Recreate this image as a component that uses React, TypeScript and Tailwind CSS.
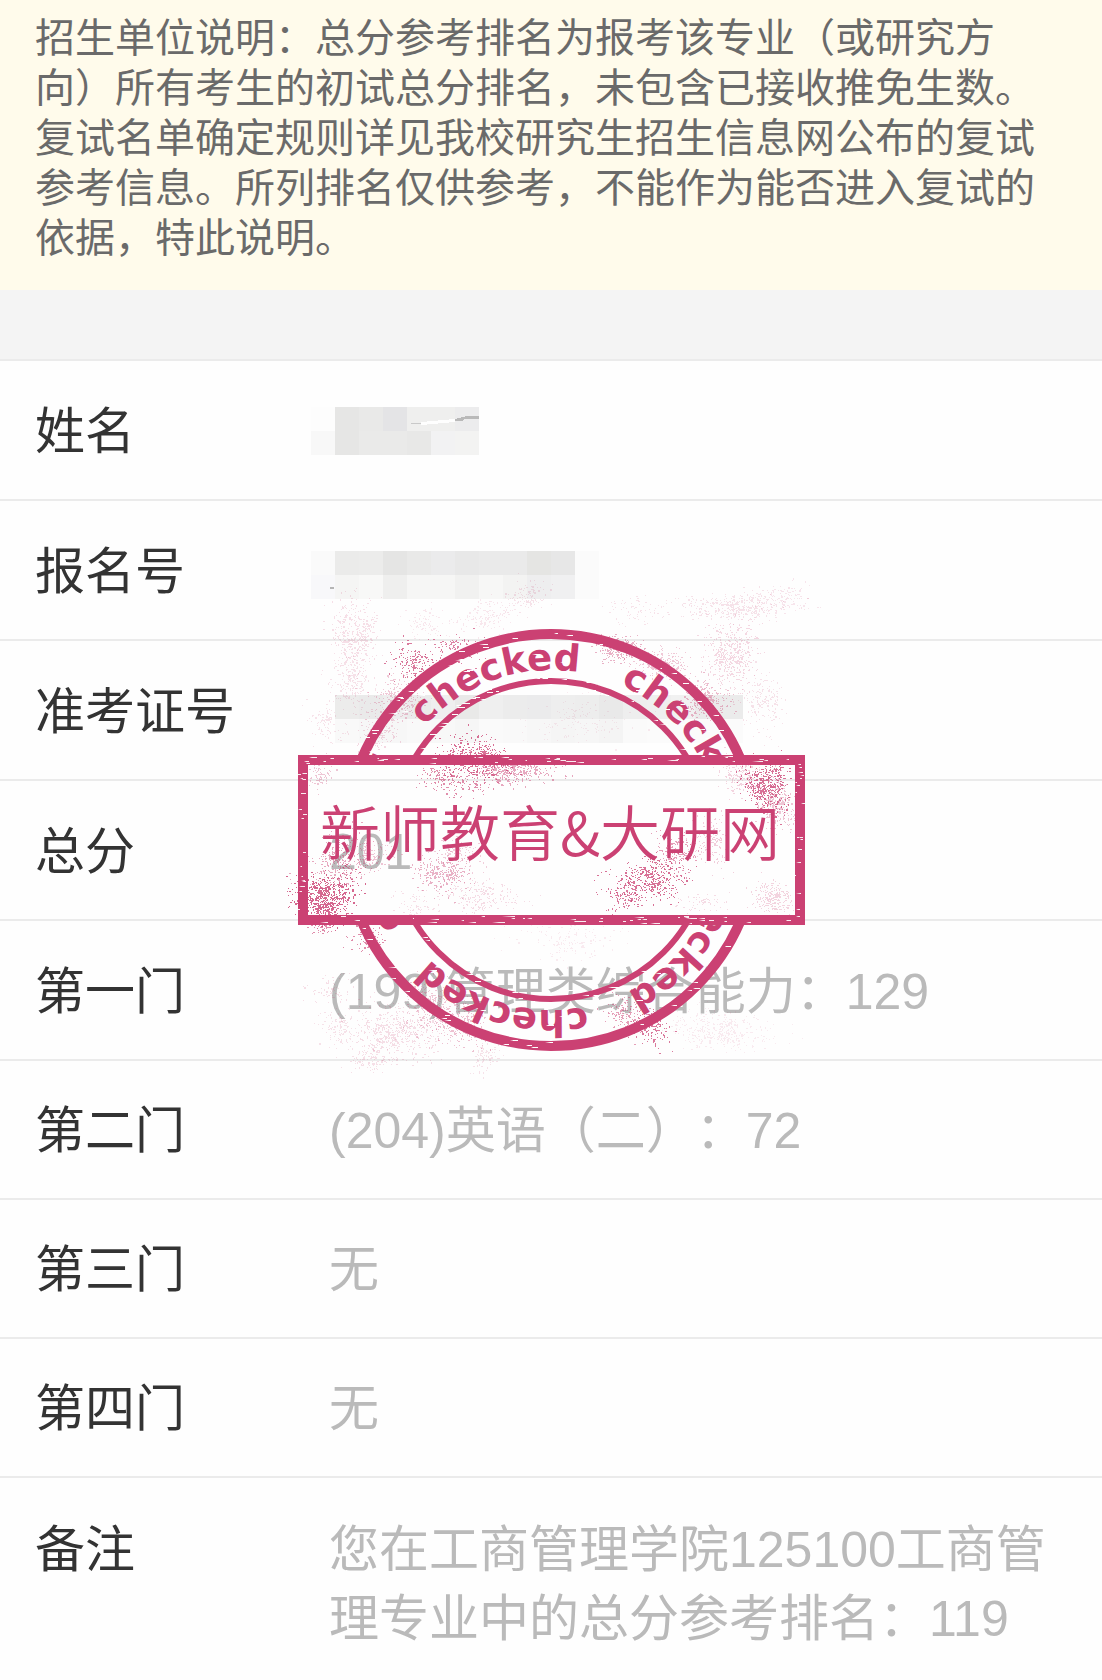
import type React from 'react';

const INK = '#cb4173';
const PAPER = '#fefefe';

type MosaicProps = { rows: string[][]; dy: number; children?: React.ReactNode };

// Pixelated cover over a private value, 24px cells. A row's first cell sits left of the text edge.
const Mosaic: React.FC<MosaicProps> = ({ rows, dy, children }) => (
  <svg
    className="h-12 w-full overflow-visible"
    shapeRendering="crispEdges"
    role="img"
    aria-label="已隐藏"
  >
    <g transform={`translate(0 ${dy})`}>
      {rows.map((cells, r) =>
        cells.map((fill, c) => (
          <rect key={`${r}-${c}`} x={c * 24 - 18} y={r * 24} width={24} height={24} fill={fill} />
        )),
      )}
      {children}
    </g>
  </svg>
);

const NAME_CELLS = [
  ['#fdfdfd', '#e6e6e5', '#e9e9e8', '#e4e4e6', '#efefee', '#efefee', '#ececed'],
  ['#f8f8f8', '#e6e6e5', '#eaeae9', '#eaeae9', '#e8e8e7', '#f2f2f3', '#f3f3f2'],
];

const APPLY_CELLS = [
  ['#fafafa', '#ebebea', '#ececeb', '#e5e5e4', '#e9e9e8', '#ebebec', '#e8e8e8', '#eaeaea', '#eaeaea', '#e5e5e3', '#e7e7e7', '#fbfbfb'],
  ['#f8f8fa', '#f5f5f4', '#f8f8f7', '#efefee', '#f6f6f5', '#f6f6f5', '#f1f1f0', '#f7f7f6', '#f3f3f2', '#eeeeef', '#f0f0f1', '#fbfbfb'],
];

const TICKET_CELLS = [
  ['#fefefe', '#ececeb', '#eaeaea', '#eeeeee', '#ebebeb', '#efefef', '#e9e9e8', '#efefef', '#ececec', '#ebebec', '#eeeeee', '#ededed', '#e9e9e9', '#eeeeee', '#efefef', '#f1f1f1', '#ebebeb', '#ebebeb'],
  ['#fefefe', '#f9f9f9', '#f7f7f7', '#f7f7f7', '#f9f9f9', '#f8f8f8', '#f6f6f6', '#fafafa', '#f9f9f9', '#f7f7f7', '#f5f5f5', '#f6f6f6', '#f4f4f4', '#fafafa', '#fbfbfb', '#fbfbfb', '#fbfbfb', '#fbfbfb'],
];

// Small repeatable generator, so that the stamp's grain is the same on every render.
const random = (seed: number) => () => {
  seed = (seed + 0x6d2b79f5) | 0;
  let t = Math.imul(seed ^ (seed >>> 15), 1 | seed);
  t = (t + Math.imul(t ^ (t >>> 7), 61 | t)) ^ t;
  return ((t ^ (t >>> 14)) >>> 0) / 4294967296;
};

// cx, cy, rx, ry, dots, opacity
const SPLATTERS: number[][] = [
  [413, 663, 22, 22, 170, 0.7],
  [455, 650, 26, 18, 110, 0.65],
  [398, 698, 26, 26, 260, 0.28],
  [378, 732, 22, 20, 140, 0.2],
  [355, 635, 28, 34, 420, 0.16],
  [350, 680, 24, 28, 220, 0.15],
  [325, 722, 18, 22, 90, 0.14],
  [425, 622, 24, 20, 80, 0.12],
  [485, 615, 32, 20, 140, 0.12],
  [526, 596, 24, 16, 110, 0.15],
  [618, 648, 26, 12, 260, 0.4],
  [665, 665, 34, 16, 240, 0.28],
  [705, 700, 24, 20, 260, 0.35],
  [632, 608, 24, 16, 70, 0.14],
  [735, 606, 58, 16, 420, 0.15],
  [780, 600, 32, 18, 130, 0.13],
  [730, 655, 30, 34, 480, 0.2],
  [762, 702, 26, 30, 180, 0.15],
  [475, 757, 36, 22, 430, 0.75],
  [510, 769, 42, 16, 450, 0.45],
  [440, 776, 24, 14, 110, 0.6],
  [466, 784, 26, 14, 80, 0.6],
  [320, 774, 16, 16, 80, 0.3],
  [766, 785, 26, 26, 430, 0.75],
  [776, 804, 20, 26, 330, 0.3],
  [740, 775, 22, 22, 200, 0.22],
  [323, 897, 28, 28, 700, 0.8],
  [337, 862, 30, 30, 300, 0.45],
  [372, 855, 22, 18, 120, 0.3],
  [443, 872, 34, 18, 300, 0.4],
  [460, 852, 26, 14, 90, 0.25],
  [480, 896, 38, 18, 220, 0.18],
  [415, 905, 18, 18, 70, 0.16],
  [652, 878, 36, 24, 380, 0.75],
  [626, 894, 22, 18, 130, 0.7],
  [675, 852, 22, 22, 170, 0.5],
  [710, 843, 20, 24, 140, 0.25],
  [773, 898, 22, 18, 240, 0.22],
  [700, 904, 26, 14, 60, 0.18],
  [322, 928, 14, 8, 40, 0.6],
  [368, 936, 18, 16, 90, 0.6],
  [430, 1005, 28, 26, 340, 0.28],
  [460, 1025, 30, 20, 300, 0.32],
  [395, 1032, 44, 28, 520, 0.17],
  [340, 1028, 20, 24, 120, 0.15],
  [330, 990, 20, 18, 70, 0.16],
  [372, 1058, 24, 16, 120, 0.16],
  [486, 1055, 16, 16, 90, 0.15],
  [625, 1014, 22, 18, 150, 0.5],
  [650, 1026, 20, 20, 150, 0.7],
  [720, 1030, 50, 22, 420, 0.1],
  [570, 940, 50, 26, 150, 0.1],
  [580, 722, 60, 26, 140, 0.1],
];

const splatterPath = ([cx, cy, rx, ry, dots]: number[], seed: number) => {
  const next = random(seed * 7919 + 13);
  let d = '';
  for (let i = 0; i < dots; i++) {
    const angle = next() * Math.PI * 2;
    const wobble = 1 + 0.18 * Math.sin(angle * 2 + seed) + 0.14 * Math.sin(angle * 3 + seed * 2);
    // dense in the middle, thinning out towards the rim
    const reach = Math.min(Math.sqrt(-Math.log(1 - next())) * 0.65, 1.3) * wobble;
    const width = next() > 0.8 ? 2 : 1;
    const height = next() > 0.85 ? 2 : 1;
    const x = Math.round(cx + Math.cos(angle) * rx * reach);
    const y = Math.round(cy + Math.sin(angle) * ry * reach);
    d += `M${x} ${y}h${width}v${height}h-${width}z`;
  }
  return d;
};

// Short horizontal scratches where the ink is missing.
const ringScratches = () => {
  const next = random(42);
  let d = '';
  for (let i = 0; i < 190; i++) {
    const angle = next() * Math.PI * 2;
    const radius = i % 3 === 0 ? 159 : i % 3 === 1 ? 206 : 172 + next() * 24;
    const x = Math.round(551 + Math.cos(angle) * radius + next() * 8 - 7);
    const y = Math.round(840 + Math.sin(angle) * radius + next() * 8 - 4);
    d += `M${x} ${y}h${Math.round(1 + next() * 8)}v1h-${Math.round(1 + next() * 6)}z`;
  }
  return d;
};

const frameScratches = () => {
  const next = random(99);
  let d = '';
  for (let i = 0; i < 80; i++) {
    const x = Math.round(302 + next() * 490);
    const y = Math.round((i % 2 ? 756 : 916) + next() * 7);
    d += `M${x} ${y}h${Math.round(1 + next() * next() * 14)}v1h-${Math.round(1 + next() * 5)}z`;
  }
  for (let i = 0; i < 36; i++) {
    const x = Math.round((i % 2 ? 298 : 795) + next() * 6);
    const y = Math.round(760 + next() * 158);
    d += `M${x} ${y}h${Math.round(1 + next() * 4)}v1h-${Math.round(1 + next() * 3)}z`;
  }
  return d;
};

const Stamp: React.FC = () => (
  <svg
    className="pointer-events-none absolute top-[210px] left-1/2 h-[520px] w-[560px] -translate-x-1/2"
    viewBox="271 569 560 520"
    fill={INK}
  >
    <defs>
      <clipPath id="outside-frame">
        <rect x="271" y="569" width="560" height="187" />
        <rect x="271" y="924" width="560" height="166" />
      </clipPath>
      <path id="word-arc" d="M551 670a170 170 0 0 1 0 340a170 170 0 0 1 0 -340" />
    </defs>
    {SPLATTERS.map((splatter, i) => (
      <path key={i} d={splatterPath(splatter, i + 1)} opacity={splatter[5]} />
    ))}
    <g clipPath="url(#outside-frame)">
      <circle cx="551" cy="840" r="206" fill="none" stroke={INK} strokeWidth="10" />
      <circle cx="551" cy="840" r="159" fill="none" stroke={INK} strokeWidth="6" />
      {[-48, 24, 96, 168, 240].map((turn) => (
        <text
          key={turn}
          transform={`rotate(${turn} 551 840)`}
          className="font-['DejaVu_Sans',sans-serif] text-[37px] font-bold"
        >
          <textPath href="#word-arc">checked</textPath>
        </text>
      ))}
      <path d={ringScratches()} fill={PAPER} />
    </g>
    <rect x="303" y="760" width="497" height="160" fill="none" stroke={INK} strokeWidth="10" />
    <path d={frameScratches()} fill={PAPER} opacity="0.9" />
    <text
      x="550"
      y="856"
      textAnchor="middle"
      className="font-['Noto_Sans_CJK_SC',sans-serif] text-[60px] font-[350]"
    >
      新师教育&amp;大研网
    </text>
  </svg>
);

type RowProps = { label: string; short?: boolean; children: React.ReactNode };

const Row: React.FC<RowProps> = ({ label, short, children }) => (
  <div
    className={`flex items-center border-t-2 border-[#ebebeb] px-[35px] pt-1 ${short ? 'h-[139px]' : 'h-[140px]'}`}
  >
    <dt className="w-[294px] shrink-0 text-[#333]">{label}</dt>
    <dd className="min-w-0 flex-1 text-[#bababa]">{children}</dd>
  </div>
);

export default function App() {
  return (
    <main className="min-h-screen bg-[#fefefe] font-['Liberation_Sans','Noto_Sans_CJK_SC',sans-serif] [text-spacing-trim:space-all]">
      <p className="bg-[#fffbeb] px-[35px] pt-[13px] pb-[27px] text-[40px] leading-[50px] text-[#6a6a6a]">
        招生单位说明：总分参考排名为报考该专业（或研究方向）所有考生的初试总分排名，未包含已接收推免生数。复试名单确定规则详见我校研究生招生信息网公布的复试参考信息。所列排名仅供参考，不能作为能否进入复试的依据，特此说明。
      </p>
      <div className="h-[69px] bg-[#f4f4f4]" />
      <div className="relative">
        <dl className="text-[50px] leading-[69px]">
          <Row label="姓名">
            <Mosaic rows={NAME_CELLS} dy={-1}>
              <path d="M82 16h10v1h-10z" fill="#c9c9c9" />
              <path d="M92 15l34 -3v3l-34 3z" fill={PAPER} />
              <path d="M126 12l12 -3h12v3h-14l-3 2h-7z" fill="#b9b9b9" />
            </Mosaic>
          </Row>
          <Row label="报名号">
            <Mosaic rows={APPLY_CELLS} dy={3}>
              <path d="M1 36h4v2h-4z" fill="#b5b5b5" />
            </Mosaic>
          </Row>
          <Row label="准考证号">
            <Mosaic rows={TICKET_CELLS} dy={7} />
          </Row>
          <Row label="总分">201</Row>
          <Row label="第一门">(199)管理类综合能力：129</Row>
          <Row label="第二门" short>
            (204)英语（二）：72
          </Row>
          <Row label="第三门" short>
            无
          </Row>
          <Row label="第四门" short>
            无
          </Row>
          <div className="flex items-start border-t-2 border-[#ebebeb] px-[35px] pt-[38px] pb-6">
            <dt className="w-[294px] shrink-0 text-[#333]">备注</dt>
            <dd className="min-w-0 flex-1 text-[#bababa]">
              您在工商管理学院125100工商管理专业中的总分参考排名：119
            </dd>
          </div>
        </dl>
        <Stamp />
      </div>
    </main>
  );
}
